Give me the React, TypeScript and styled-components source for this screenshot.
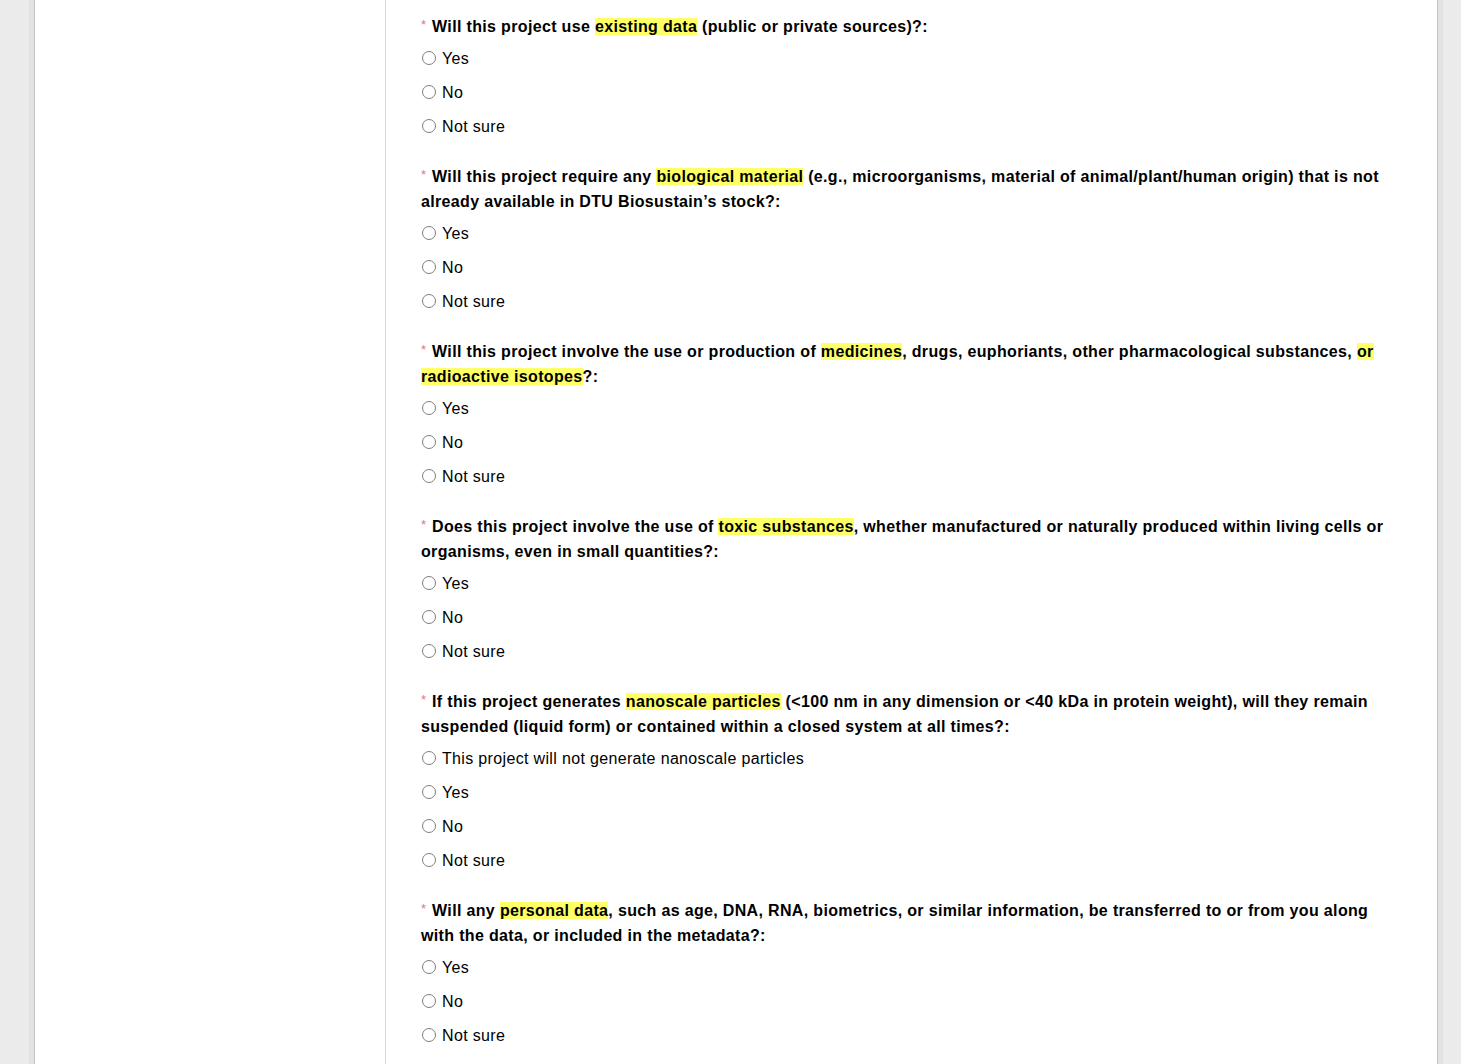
import React from "react";
import styled, { createGlobalStyle } from "styled-components";

const Global = createGlobalStyle`
  html, body { margin: 0; padding: 0; background: #ebebeb; }
  body { font-family: "Liberation Sans", Arial, sans-serif; }
`;

const Page = styled.div`
  margin-left: 34px;
  width: 1404px;
  min-height: 1100px;
  box-sizing: border-box;
  background: #fff;
  border-left: 1px solid #c4c4c4;
  border-right: 1px solid #c4c4c4;
  box-shadow: 0 0 0 5px #e2e2e2;
  display: grid;
  grid-template-columns: 351px 1fr;
`;

const Sidebar = styled.aside`
  border-right: 1px solid #d6d6d6;
`;

const Main = styled.main`
  padding: 13.5px 36px 40px 35px;
`;

const Question = styled.fieldset`
  border: 0;
  margin: 0 0 20px 0;
  padding: 0;
`;

const Legend = styled.div`
  font-size: 16px;
  letter-spacing: 0.34px;
  line-height: 25px;
  font-weight: bold;
  color: #000;
  margin-bottom: 3px;
`;

const Req = styled.span`
  font-weight: normal;
  font-size: 13px;
  letter-spacing: 0;
  color: #e07878;
  vertical-align: top;
  line-height: 22px;
  margin-right: 6px;
`;

const Mark = styled.span`
  background: #ffff66;
`;

const Option = styled.label`
  display: flex;
  align-items: center;
  height: 34px;
  font-size: 16px;
  letter-spacing: 0.34px;
  color: #000;
`;

const Radio = styled.input`
  appearance: none;
  -webkit-appearance: none;
  flex: none;
  width: 14px;
  height: 14px;
  margin: 0 6px 1px 1px;
  border: 1px solid #7e7e7e;
  border-radius: 50%;
  background: #fff;
  box-sizing: border-box;
`;

type Part = string | { hl: string };
type Q = { id: string; text: Part[]; options: string[] };

const std = ["Yes", "No", "Not sure"];

const questions: Q[] = [
  {
    id: "q1",
    text: ["Will this project use ", { hl: "existing data" }, " (public or private sources)?:"],
    options: std,
  },
  {
    id: "q2",
    text: [
      "Will this project require any ",
      { hl: "biological material" },
      " (e.g., microorganisms, material of animal/plant/human origin) that is not already available in DTU Biosustain\u2019s stock?:",
    ],
    options: std,
  },
  {
    id: "q3",
    text: [
      "Will this project involve the use or production of ",
      { hl: "medicines" },
      ", drugs, euphoriants, other pharmacological substances, ",
      { hl: "or radioactive isotopes" },
      "?:",
    ],
    options: std,
  },
  {
    id: "q4",
    text: [
      "Does this project involve the use of ",
      { hl: "toxic substances" },
      ", whether manufactured or naturally produced within living cells or organisms, even in small quantities?:",
    ],
    options: std,
  },
  {
    id: "q5",
    text: [
      "If this project generates ",
      { hl: "nanoscale particles" },
      " (<100 nm in any dimension or <40 kDa in protein weight), will they remain suspended (liquid form) or contained within a closed system at all times?:",
    ],
    options: ["This project will not generate nanoscale particles", ...std],
  },
  {
    id: "q6",
    text: [
      "Will any ",
      { hl: "personal data" },
      ", such as age, DNA, RNA, biometrics, or similar information, be transferred to or from you along with the data, or included in the metadata?:",
    ],
    options: std,
  },
];

export default function App() {
  return (
    <>
      <Global />
      <Page>
        <Sidebar />
        <Main>
          {questions.map((q) => (
            <Question key={q.id}>
              <Legend>
                <Req>*</Req>
                {q.text.map((p, i) =>
                  typeof p === "string" ? <React.Fragment key={i}>{p}</React.Fragment> : <Mark key={i}>{p.hl}</Mark>
                )}
              </Legend>
              {q.options.map((o) => (
                <Option key={o}>
                  <Radio type="radio" name={q.id} />
                  {o}
                </Option>
              ))}
            </Question>
          ))}
        </Main>
      </Page>
    </>
  );
}
